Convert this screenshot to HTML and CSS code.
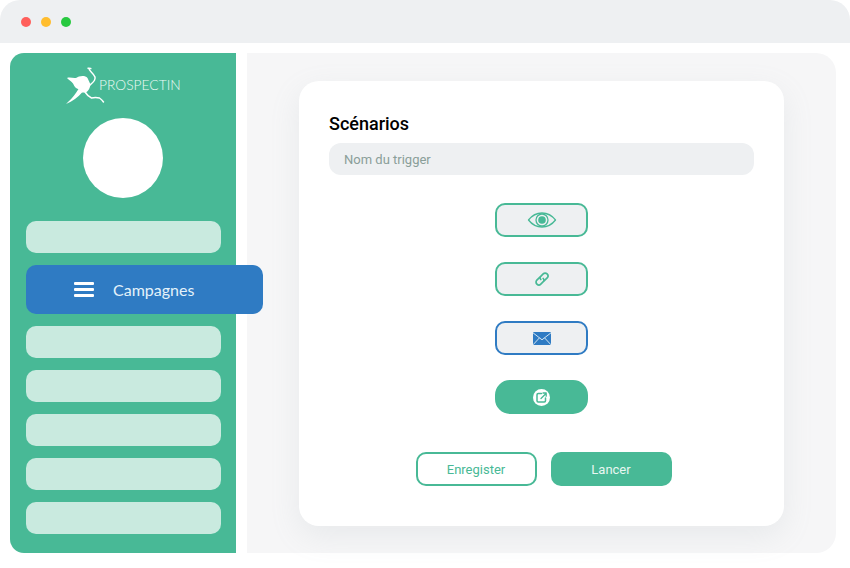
FILE: index.html
```html
<!DOCTYPE html>
<html lang="fr">
<head>
<meta charset="utf-8">
<title>Prospectin</title>
<link rel="stylesheet" href="styles.css">
</head>
<body>
<div class="window">
  <header class="titlebar">
    <span class="dot dot-red"></span>
    <span class="dot dot-yellow"></span>
    <span class="dot dot-green"></span>
  </header>
  <div class="content">
    <aside class="sidebar">
      <div class="logo">
        <svg class="ostrich" width="42" height="40" viewBox="0 0 42 40" aria-hidden="true">
          <path class="fill" d="M4 13C7 11.800 10 13.500 13 13C16 11 22 10 24.500 13L27.500 19.500C27 23 25.500 26 23 27.500L19 27.500C17 25.500 15 23.500 13 23C11.500 22 11 20 10 18.500C8.500 16.500 6 15 4 13Z"/>
          <path class="fill" d="M15.500 24L19.500 27C15 32 9.500 36.500 3 39L5.500 36.500C9.500 33 12.500 29 15.500 24Z"/>
          <path class="line" d="M26 3.500C26 6 30.500 8 32 12C32.800 16 29 18 27 20"/>
          <path class="line" d="M25 3.200L27.800 3.600"/>
          <path class="line" d="M22 27C24 30 26 32 28.500 33C31 32.500 34 32.500 36.500 33C38 34 39.500 35.500 40.500 37"/>
        </svg>
        <span class="logo-text">PROSPECTIN</span>
      </div>
      <div class="avatar"></div>
      <nav class="nav">
        <div class="nav-item"></div>
        <div class="nav-item nav-active">
          <span class="burger"><i></i><i></i><i></i></span>
          <span class="nav-label">Campagnes</span>
        </div>
        <div class="nav-item"></div>
        <div class="nav-item"></div>
        <div class="nav-item"></div>
        <div class="nav-item"></div>
        <div class="nav-item"></div>
      </nav>
    </aside>
    <main class="main">
      <section class="card">
        <h1 class="title">Scénarios</h1>
        <div class="field">Nom du trigger</div>
        <div class="steps">
          <div class="step">
            <svg width="30" height="16" viewBox="0 0 30 16" aria-hidden="true">
              <path class="st" d="M1.500 8C5 3.500 9.500 1 15 1C20.500 1 25 3.500 28.500 8C25 12.500 20.500 15 15 15C9.500 15 5 12.500 1.500 8Z"/>
              <circle class="st" cx="15" cy="8" r="6"/>
              <circle class="sf" cx="15" cy="8" r="3.800"/>
            </svg>
          </div>
          <div class="step">
            <svg width="16" height="16" viewBox="0 0 16 16" aria-hidden="true">
              <g class="st st-chain" transform="rotate(-45 8 8)">
                <path d="M7.500 5.200H3.500C2 5.200 0.800 6.400 0.800 8C0.800 9.600 2 10.800 3.500 10.800H7C8.300 10.800 9.200 9.600 9.200 8.500"/>
                <path d="M8.500 10.800H12.500C14 10.800 15.200 9.600 15.200 8C15.200 6.400 14 5.200 12.500 5.200H9C7.700 5.200 6.800 6.400 6.800 7.500"/>
              </g>
            </svg>
          </div>
          <div class="step step-blue">
            <svg width="18" height="13" viewBox="0 0 18 13" aria-hidden="true">
              <path class="mail" d="M0 1C0 0.400 0.400 0 1 0H17C17.600 0 18 0.400 18 1V12C18 12.600 17.600 13 17 13H1C0.400 13 0 12.600 0 12Z"/>
              <path class="mail-line" d="M0 0.800L9 7.800L18 0.800M0 12.800L6.500 5.800M18 12.800L11.500 5.800"/>
            </svg>
          </div>
          <div class="step step-solid">
            <span class="share">
              <svg width="11" height="11" viewBox="0 0 11 11" aria-hidden="true">
                <path class="st st-wide" d="M5.500 1.500H2.200C1.500 1.500 1 2 1 2.700V8.800C1 9.500 1.500 10 2.200 10H8.300C9 10 9.500 9.500 9.500 8.800V6"/>
                <path class="st" d="M5 6.500L10 1.500M7 1H10.200V4.200"/>
              </svg>
            </span>
          </div>
        </div>
        <div class="actions">
          <div class="btn btn-outline">Enregister</div>
          <div class="btn btn-solid">Lancer</div>
        </div>
      </section>
    </main>
  </div>
</div>
</body>
</html>
```
FILE: styles.css
```css
* { box-sizing: border-box; }
html, body { margin: 0; padding: 0; background: #fff; }
body { width: 850px; height: 568px; overflow: hidden; font-family: Roboto, "Liberation Sans", sans-serif; }

.window { width: 850px; height: 568px; background: #fff; border-radius: 20px; display: flex; flex-direction: column; overflow: hidden; }

.titlebar { height: 43px; flex: none; background: #eef0f2; display: flex; align-items: center; gap: 10px; padding: 0 0 0 21px; }
.dot { width: 10px; height: 10px; border-radius: 50%; }
.dot-red { background: #ff5f5b; }
.dot-yellow { background: #ffbd2e; }
.dot-green { background: #28c940; }

.content { flex: none; height: 500px; margin-top: 10px; padding-left: 10px; display: flex; gap: 11px; }

.sidebar { width: 226px; flex: none; background: #48b996; border-radius: 14px 0 0 14px; padding: 12px 15px 0 16px; display: flex; flex-direction: column; position: relative; z-index: 1; }

.logo { height: 40px; flex: none; display: flex; align-items: flex-start; margin-left: 37px; }
.ostrich { flex: none; display: block; }
.fill { fill: #fff; }
.line { fill: none; stroke: #fff; stroke-width: 1.500; stroke-linecap: round; stroke-linejoin: round; }
.logo-text { margin: 12px 0 0 -6px; font-family: Lato, sans-serif; font-weight: 300; font-size: 13.800px; line-height: 16px; color: #eef9f5; }

.avatar { width: 80px; height: 80px; flex: none; border-radius: 50%; background: #fff; margin: 13px 0 0 57px; }

.nav { margin-top: 23px; display: flex; flex-direction: column; gap: 12px; }
.nav-item { height: 32px; width: 195px; border-radius: 10px; background: #c9eadf; }
.nav-active { height: 49px; width: 237px; background: #2f7bc3; display: flex; align-items: center; padding-left: 48px; }
.burger { width: 20px; height: 15px; display: flex; flex-direction: column; justify-content: space-between; }
.burger i { display: block; height: 3px; background: #fff; border-radius: 1px; }
.nav-label { margin-left: 19px; font-family: Lato, sans-serif; font-size: 16px; color: #e4f2fa; }

.main { width: 589px; flex: none; background: #f6f6f7; border-radius: 0 20px 20px 0; padding: 28px 52px 27px; }
.card { height: 445px; background: #fff; border-radius: 20px; padding: 32px 30px 0; box-shadow: 0 10px 30px rgba(150, 160, 170, 0.14); }

.title { margin: 0; font-size: 18px; line-height: 22px; font-weight: 500; color: #000; }
.field { margin-top: 8px; height: 32px; border-radius: 12px; background: #eef0f2; padding-left: 15px; display: flex; align-items: center; font-size: 13px; color: #8a9e99; }

.steps { margin-top: 28px; display: flex; flex-direction: column; align-items: center; gap: 25px; }
.step { width: 93px; height: 34px; border: 2px solid #48b996; border-radius: 10px; background: #eef0f2; display: flex; align-items: center; justify-content: center; }
.step svg { display: block; }
.st { fill: none; stroke: #48b996; stroke-width: 1.300; stroke-linejoin: round; stroke-linecap: round; }
.st-wide { stroke-width: 1.500; }
.st-chain { stroke-width: 1.700; }
.sf { fill: #48b996; }
.step-blue { border-color: #2f7bc3; }
.mail { fill: #2f7bc3; }
.mail-line { fill: none; stroke: #e4f0f6; stroke-width: 0.900; }
.step-solid { background: #48b996; border-radius: 15px; }
.share { width: 17px; height: 17px; border-radius: 50%; background: #fff; display: flex; align-items: center; justify-content: center; }

.actions { margin-top: 38px; padding-left: 4px; display: flex; justify-content: center; gap: 14px; }
.btn { width: 121px; height: 34px; border-radius: 10px; display: flex; align-items: center; justify-content: center; font-size: 13px; }
.btn-outline { border: 2px solid #48b996; background: #fff; color: #48b996; }
.btn-solid { background: #48b996; color: #e8f7f2; }
```
